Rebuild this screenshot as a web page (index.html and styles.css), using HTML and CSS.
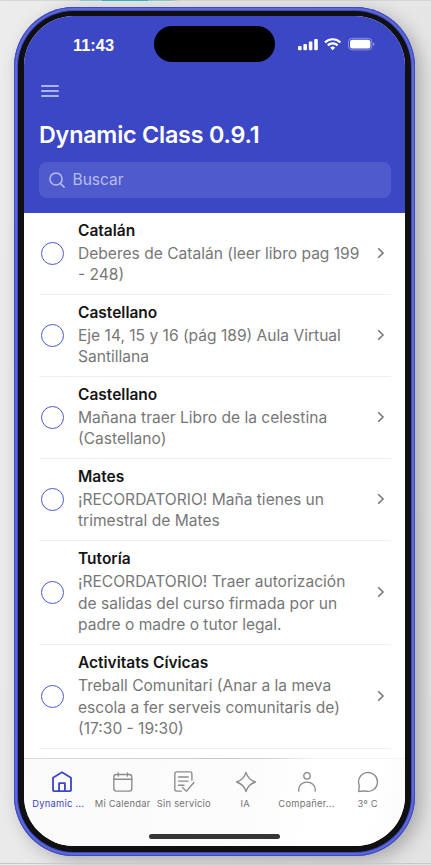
FILE: index.html
```html
<!DOCTYPE html>
<html lang="es">
<head>
<meta charset="utf-8">
<title>Dynamic Class</title>
<link rel="stylesheet" href="styles.css">
</head>
<body>
<div class="top-accent"></div>
<main class="phone">
  <div class="bezel">
    <div class="screen">
      <header class="header">
        <div class="status">
          <span class="time">11:43</span>
          <span class="island"></span>
          <svg class="status-icons" width="78" height="16" viewBox="0 0 78 16" fill="#fff">
            <rect x="0" y="9" width="3.6" height="4.3" rx="1"/>
            <rect x="5.4" y="7" width="3.6" height="6.3" rx="1"/>
            <rect x="10.8" y="4.5" width="3.6" height="8.8" rx="1"/>
            <rect x="16.2" y="2" width="3.6" height="11.3" rx="1"/>
            <g fill="none" stroke="#fff" stroke-width="2.2"><path d="M27 5.4a11 11 0 0 1 15.4 0"/><path d="M29.8 8.4a7 7 0 0 1 9.8 0"/></g>
            <path d="M34.7 13.2l-2.5-2.5a3.6 3.6 0 0 1 5 0z"/>
            <rect x="50.5" y="1.3" width="23.4" height="11.6" rx="3.8" fill="none" stroke="#fff" stroke-opacity=".4"/>
            <rect x="52" y="2.8" width="20.4" height="8.6" rx="2.5"/>
            <path d="M75.2 5.2v3.8c1.8-.7 1.8-3.1 0-3.8z" fill-opacity=".45"/>
          </svg>
        </div>
        <svg class="menu" width="18" height="14" viewBox="0 0 18 14" stroke="#fff" stroke-opacity=".78" stroke-width="1.7" stroke-linecap="round"><path d="M.9 2h16.2M.9 7h16.2M.9 12h16.2"/></svg>
        <h1>Dynamic Class 0.9.1</h1>
        <div class="search">
          <svg width="16" height="16" viewBox="0 0 16 16" fill="none" stroke="currentColor" stroke-width="1.5" stroke-linecap="round"><circle cx="7" cy="7" r="6.1"/><path d="M11.5 11.5l3.6 3.6"/></svg>
          <span>Buscar</span>
        </div>
      </header>
      <ul class="list">
        <li><i class="check"></i><div class="copy"><h2>Catalán</h2><p>Deberes de Catalán (leer libro pag 199<br>- 248)</p></div><svg class="chev" viewBox="0 0 8 12"><path d="M1.2 1.2L6 6l-4.8 4.8"/></svg></li>
        <li><i class="check"></i><div class="copy"><h2>Castellano</h2><p>Eje 14, 15 y 16 (pág 189) Aula Virtual<br>Santillana</p></div><svg class="chev" viewBox="0 0 8 12"><path d="M1.2 1.2L6 6l-4.8 4.8"/></svg></li>
        <li><i class="check"></i><div class="copy"><h2>Castellano</h2><p>Mañana traer Libro de la celestina<br>(Castellano)</p></div><svg class="chev" viewBox="0 0 8 12"><path d="M1.2 1.2L6 6l-4.8 4.8"/></svg></li>
        <li><i class="check"></i><div class="copy"><h2>Mates</h2><p>¡RECORDATORIO! Maña tienes un<br>trimestral de Mates</p></div><svg class="chev" viewBox="0 0 8 12"><path d="M1.2 1.2L6 6l-4.8 4.8"/></svg></li>
        <li class="tall"><i class="check"></i><div class="copy"><h2>Tutoría</h2><p>¡RECORDATORIO! Traer autorización<br>de salidas del curso firmada por un<br>padre o madre o tutor legal.</p></div><svg class="chev" viewBox="0 0 8 12"><path d="M1.2 1.2L6 6l-4.8 4.8"/></svg></li>
        <li class="tall"><i class="check"></i><div class="copy"><h2>Activitats Cívicas</h2><p>Treball Comunitari (Anar a la meva<br>escola a fer serveis comunitaris de)<br>(17:30 - 19:30)</p></div><svg class="chev" viewBox="0 0 8 12"><path d="M1.2 1.2L6 6l-4.8 4.8"/></svg></li>
      </ul>
      <nav class="tabs">
        <a class="tab active"><svg viewBox="0 0 24 24"><path d="M2.2 7.3L12 1.4l9.8 5.900v13.700a1 1 0 0 1-1 1H3.200a1 1 0 0 1-1-1z"/><path d="M8.800 22v-8.700h6.400V22"/></svg><span>Dynamic ...</span></a>
        <a class="tab"><svg viewBox="0 0 24 24"><rect x="2" y="3.8" width="19.6" height="18.2" rx="2.8"/><path d="M2 9h19.6M6.8 2v3.6M16.800 2v3.600"/></svg><span>Mi Calendar</span></a>
        <a class="tab"><svg viewBox="0 0 24 24"><path d="M20.600 10V3a2 2 0 0 0-2-2H4a2 2 0 0 0-2 2v17a2 2 0 0 0 2 2h5M6 6.500h10.500M6 11h10.500M6 15.500h6M10.300 18l4.500 4 8-9.500"/></svg><span>Sin servicio</span></a>
        <a class="tab"><svg viewBox="0 0 24 24"><path d="M12 1.500c1.600 5.400 4.500 8.700 10.300 10.500-5.800 1.800-8.700 5.100-10.300 10.500-1.600-5.400-4.500-8.700-10.300-10.500 5.800-1.800 8.700-5.100 10.300-10.500z"/></svg><span>IA</span></a>
        <a class="tab"><svg viewBox="0 0 24 24"><circle cx="12" cy="5.300" r="3.500"/><path d="M3 22v-2a9 7.800 0 0 1 18 0v2"/></svg><span>Compañer...</span></a>
        <a class="tab"><svg viewBox="0 0 24 24"><path d="M2.500 15.800A10.300 10.300 0 1 1 8.900 21.700L1.900 22.300z"/></svg><span>3º C</span></a>
      </nav>
      <div class="home"></div>
    </div>
  </div>
</main>
<div class="bottom-line"></div>
</body>
</html>
```
FILE: styles.css
```css
* { box-sizing: border-box; margin: 0; padding: 0; }
body {
  width: 431px; height: 865px; overflow: hidden;
  display: flex; flex-direction: column;
  font-family: Inter, "Liberation Sans", sans-serif;
  background: linear-gradient(100deg, #ececec, #e7e7e7 60%, #e3e3e3);
}
.top-accent {
  flex: none; height: 1px; width: 431px;
  background: linear-gradient(90deg, #d6d6d6 80px, #8fc9dc 80px 102px, #35b4ca 102px 148px, #86c9d4 148px 170px, #d6d6d6 180px);
}
.phone {
  flex: none; width: 401px; height: 849px; margin: 6px 0 0 14px; padding: 4px;
  border-radius: 60px; background: #3d49c8;
  box-shadow: inset 0 0 0 1px #3d49c8, inset 0 0 0 3px #5f69d2, 6px 5px 18px rgba(0,0,0,.26);
}
.bezel { height: 100%; padding: 5px 6px 6px; border-radius: 56px; background: #101013; }
.screen {
  height: 100%; overflow: hidden; border-radius: 50px; background: #fff;
  display: flex; flex-direction: column;
}
.header { flex: none; height: 197px; padding: 0 15px; background: #3c47c6; color: #fff; }
.status { height: 68px; position: relative; }
.time {
  position: absolute; left: 34px; top: 20px;
  font: 700 16.4px/19px "Liberation Sans", Arial, sans-serif;
}
.island { position: absolute; left: 114.5px; top: 10px; width: 121px; height: 35.5px; border-radius: 18px; background: #000; }
.status-icons { position: absolute; left: 259px; top: 21px; }
.menu { display: block; margin: .3px 0 0 1.5px; }
h1 { margin-top: 21.7px; font-size: 23.3px; line-height: 30px; font-weight: 600; letter-spacing: -.2px; white-space: nowrap; }
.search {
  width: 352px; height: 36px; margin-top: 12px; padding-left: 10px; border-radius: 8px;
  display: flex; align-items: center; gap: 7.5px;
  background: #4f5bcd; color: #b8bded; font-size: 15.5px;
}
.list { flex: 1; min-height: 0; list-style: none; padding-left: 15px; }
.list li {
  display: flex; align-items: center; width: 352px; height: 82px;
  border-bottom: 1px solid #efefef; padding-left: 2px;
}
.list .tall { height: 104px; }
.check { flex: none; width: 23px; height: 23px; border: 1.3px solid #4c57d0; border-radius: 50%; }
.copy { flex: 1; margin: -.6px 0 0 14px; white-space: nowrap; }
h2 { margin-bottom: .4px; font-size: 15.5px; line-height: 22px; font-weight: 600; color: #151515; }
.list p { font-size: 15.57px; line-height: 21.7px; color: #777; }
.chev { flex: none; width: 8px; height: 12px; margin: -1px 6px 0 0; fill: none; stroke: #777; stroke-width: 1.6; }
.tabs {
  flex: none; height: 88px; padding-top: 12.7px; margin-top: auto;
  display: grid; grid-template-columns: repeat(6, 61.3px); justify-content: center;
  background: linear-gradient(100deg, #fafafa, #fcfcfc 60%, #fff 75%, #fff 90%, #fafafa); position: relative;
}
.tabs::before {
  content: ""; position: absolute; left: 0; top: 0; width: 100%; height: 1px;
  background: linear-gradient(90deg, #dedede, #c8c8c8 50%, #ccc 62%, #f4f4f4 77%);
}
.tab { display: flex; flex-direction: column; align-items: center; color: #737373; }
.tab svg { width: 22px; height: 22px; margin-left: 1px; fill: none; stroke: #8c8c8c; stroke-width: 1.5; stroke-linejoin: round; stroke-linecap: round; }
.tab span { margin-top: 5px; font-size: 9.4px; letter-spacing: .22px; line-height: 12px; white-space: nowrap; }
.active { color: #3c47c6; }
.active span { margin-left: -6px; }
.tab.active svg { stroke: #3c47c6; stroke-width: 2; }
.home { flex: none; align-self: center; width: 131px; height: 5px; margin-top: -12px; margin-bottom: 7px; border-radius: 3px; background: #353535; position: relative; }
.bottom-line { flex: none; margin-top: 7px; height: 1px; background: #c8c8c8; }
```
